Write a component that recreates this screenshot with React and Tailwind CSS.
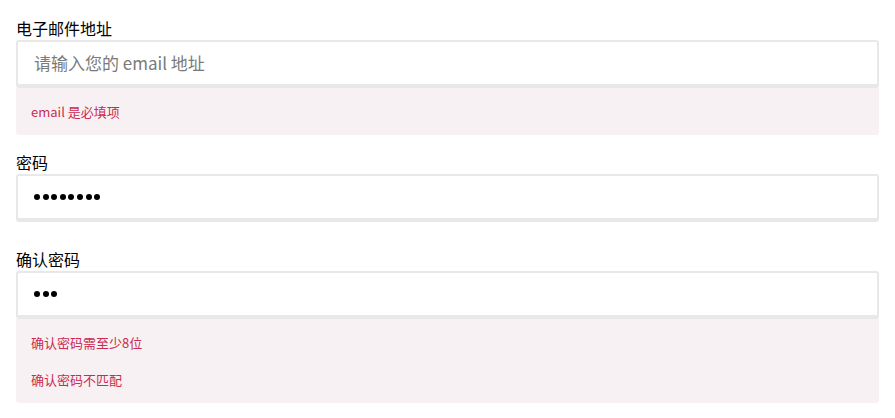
import React from "react";

const font = { fontFamily: '"Noto Sans CJK SC", "Liberation Sans", sans-serif' };

function Field({ label, children, errors, labelTop }) {
  return (
    <div className={labelTop}>
      <div className="text-[16px] leading-[22px] text-black mb-[1px]">{label}</div>
      <div className="h-[48px] bg-white border-2 border-[#e8e8e8] border-b-[4px] rounded-[3px] flex items-center pl-[16px]">
        {children}
      </div>
      {errors && (
        <div className="bg-[#f7f1f3] rounded-b-[3px] px-[15px] pt-[14px] pb-[13px] flex flex-col gap-[17px]">
          {errors.map((e) => (
            <div key={e} className="text-[13px] leading-[20px] text-[#cc2a50]">{e}</div>
          ))}
        </div>
      )}
    </div>
  );
}

function Dots({ n }) {
  return (
    <div className="flex gap-[2.6px] items-center">
      {Array.from({ length: n }).map((_, i) => (
        <div key={i} className="w-[6px] h-[6px] rounded-full bg-black" />
      ))}
    </div>
  );
}

export default function App() {
  return (
    <div className="w-[895px] h-[418px] bg-white px-[16px] pt-[17px]" style={font}>
      <Field label="电子邮件地址" errors={["email 是必填项"]}>
        <span className="text-[17px] text-[#7a7a7a]">请输入您的 email 地址</span>
      </Field>
      <Field label="密码" labelTop="mt-[16px]">
        <Dots n={8} />
      </Field>
      <Field label="确认密码" labelTop="mt-[26px]" errors={["确认密码需至少8位", "确认密码不匹配"]}>
        <Dots n={3} />
      </Field>
    </div>
  );
}
